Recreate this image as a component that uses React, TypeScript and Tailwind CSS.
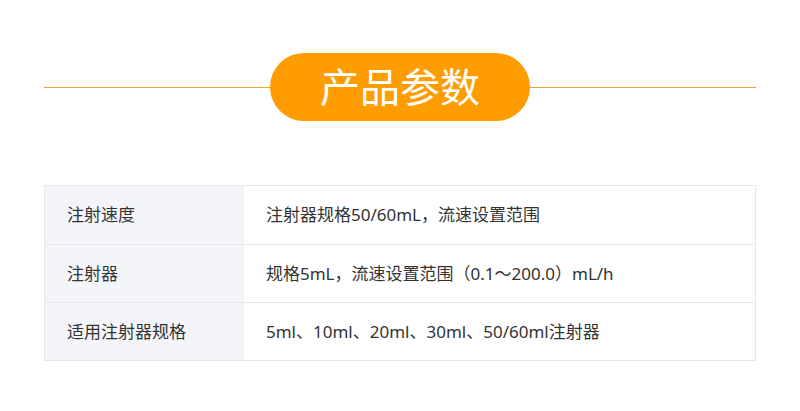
export default function App() {
  const rows = [
    ["注射速度", "注射器规格50/60mL，流速设置范围"],
    ["注射器", "规格5mL，流速设置范围（0.1～200.0）mL/h"],
    ["适用注射器规格", "5ml、10ml、20ml、30ml、50/60ml注射器"],
  ];
  return (
    <div
      className="w-[800px] h-[411px] bg-white"
      style={{ fontFamily: '"Noto Sans", "Noto Sans CJK SC", sans-serif' }}
    >
      <div className="pt-[53px] px-[44px]">
        <div className="relative h-[68px] flex items-center justify-center">
          <div className="absolute left-0 right-0 top-[34px] h-px bg-[#eea43a]" />
          <div className="relative w-[260px] h-[68px] rounded-full bg-[#ff9c00] flex items-center justify-center text-white text-[40px] leading-none">
            产品参数
          </div>
        </div>
        <div className="mt-[64px] border border-[#e4e8ee]">
          {rows.map((r, i) => (
            <div
              key={i}
              className={`flex h-[58px] text-[17px] text-[#333] ${i > 0 ? "border-t border-[#e4e8ee]" : ""}`}
            >
              <div className="w-[199px] bg-[#f3f5f9] flex items-center pl-[22px]">{r[0]}</div>
              <div className="flex-1 flex items-center pl-[22px]">{r[1]}</div>
            </div>
          ))}
        </div>
      </div>
    </div>
  );
}
